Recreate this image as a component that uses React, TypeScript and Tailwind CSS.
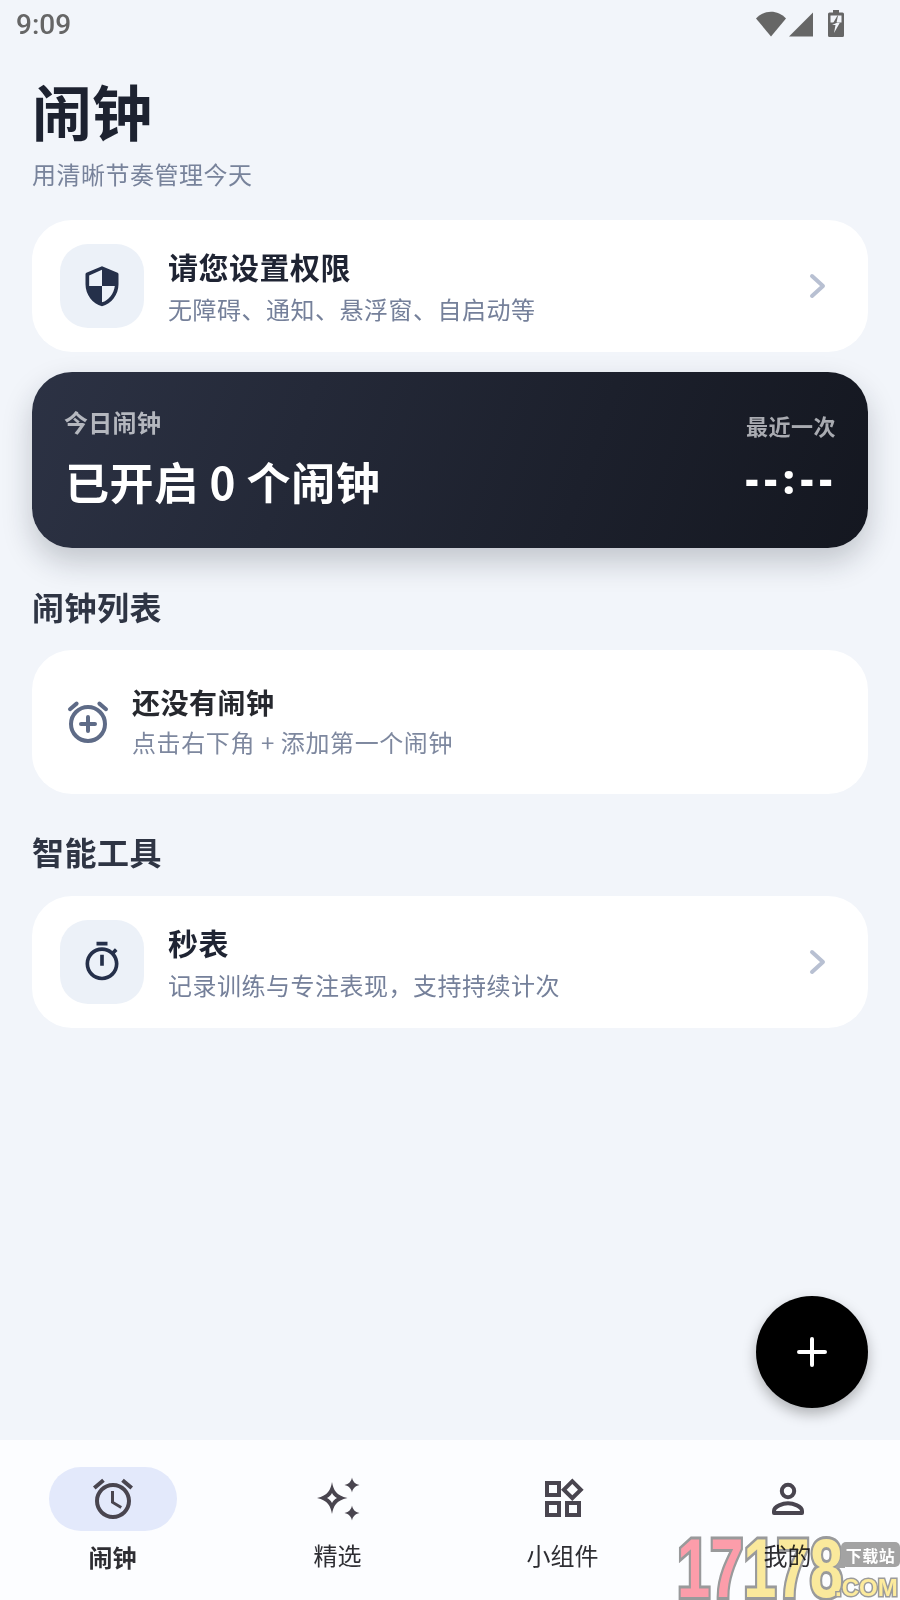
import React from "react";

const cjk = "font-['Noto_Sans_CJK_SC','Noto_Sans',sans-serif]";

const ChevronRight = () => (
  <svg width="18" height="26" viewBox="0 0 18 26" fill="none" className="mr-[25px]">
    <path d="M3 3L14 13L3 23" stroke="#b8c0d2" strokeWidth="4" strokeLinecap="round" strokeLinejoin="round" />
  </svg>
);

const ToolCard = ({
  title,
  desc,
  icon,
}: {
  title: string;
  desc: string;
  icon: React.ReactNode;
}) => (
  <div className="flex h-[132px] items-center rounded-[40px] bg-white pl-7 pr-4">
    <div className="flex h-[84px] w-[84px] items-center justify-center rounded-[28px] bg-[#ecf1f8]">
      {icon}
    </div>
    <div className="ml-[24px] flex-1">
      <div className="text-[30px] leading-[42px] font-bold tracking-[0.5px] text-[#1f2433]">{title}</div>
      <div className="mt-[4px] text-[24px] leading-[36px] tracking-[0.5px] text-[#75809a]">{desc}</div>
    </div>
    <ChevronRight />
  </div>
);

const NavItem = ({
  label,
  active,
  children,
}: {
  label: string;
  active?: boolean;
  children: React.ReactNode;
}) => (
  <div className="flex flex-col items-center">
    <div className={`flex h-16 w-32 items-center justify-center rounded-full ${active ? "bg-[#e3e9fb]" : ""}`}>
      {children}
    </div>
    <div className={`text-[24px] leading-[40px] text-[#2e2e33] ${active ? "mt-[6px] font-bold" : "mt-[4px] font-normal"}`}>
      {label}
    </div>
  </div>
);

export default function App() {
  return (
    <div className={`relative flex h-[1600px] w-[900px] flex-col overflow-hidden bg-[#f2f5fa] ${cjk}`}>
      {/* Status bar */}
      <div className="flex h-[50px] shrink-0 items-center pl-4 pr-[56px] text-[#666666]">
        <span className="font-['Roboto',sans-serif] text-[28px] leading-[50px] font-medium">9:09</span>
        <div className="ml-auto flex items-start pb-[3px]">
          <svg width="30" height="26" viewBox="0 0 30 26">
            <path d="M0 7.5C8-1.5 22-1.5 30 7.5L15 25.5z" fill="#666666" />
          </svg>
          <svg width="26" height="26" viewBox="0 0 26 26" className="ml-[2px]">
            <path d="M25 1.5V25.5H1z" fill="#666666" />
          </svg>
          <svg width="16" height="27" viewBox="0 0 16 27" className="ml-[14px] -mt-[1px]">
            <path d="M5 0h6v2.5h3.500a1.500 1.500 0 0 1 1.500 1.500v21.500a1.500 1.500 0 0 1-1.500 1.500h-13A1.500 1.500 0 0 1 0 25.500V4a1.500 1.500 0 0 1 1.500-1.500H5z" fill="#666666" />
            <path d="M2.500 5.500h11v7h-11z" fill="#f2f5fa" />
            <path d="M9.500 5.500L4 15h3.500L6 23l6-10.500H8.500L10 5.500z" fill="#666666" />
            <path d="M4 15h3.500L6 23l6-10.500h-2.500" fill="#f2f5fa" />
          </svg>
        </div>
      </div>

      {/* Page content */}
      <div className="flex-1 px-8">
        <h1 className="mt-[27px] text-[60px] leading-[66px] font-bold text-[#1d2230]">闹钟</h1>
        <p className="mt-[13px] text-[24px] leading-[36px] tracking-[0.5px] text-[#78839b]">用清晰节奏管理今天</p>

        <div className="mt-[28px]">
          <ToolCard
            title="请您设置权限"
            desc="无障碍、通知、悬浮窗、自启动等"
            icon={
              <svg width="44" height="44" viewBox="0 0 24 24" fill="#25304a">
                <path d="M12 1.200L3.500 4.800a1 1 0 0 0-.5.800V11c0 5.550 3.840 10.740 9 12 5.160-1.260 9-6.450 9-12V5.600a1 1 0 0 0-.5-.800L12 1.200zm0 10.790h7c-.53 4.120-3.280 7.790-7 8.940V12H5V6.300l7-3.110v8.800z" />
              </svg>
            }
          />
        </div>

        {/* Today summary */}
        <div className="mt-5 flex h-[176px] items-start justify-between rounded-[40px] bg-linear-110 from-[#2c3244] to-[#141720] pl-[32px] pr-[32px] shadow-[0_14px_30px_rgba(25,30,45,0.22)]">
          <div>
            <div className="mt-[32px] text-[24px] leading-[36px] font-bold tracking-[0.3px] text-[#b4b7be]">今日闹钟</div>
            <div className="mt-[11px] pl-[1px] text-[44px] leading-[60px] font-bold tracking-[0.6px] text-white">已开启 0 个闹钟</div>
          </div>
          <div className="flex flex-col items-end">
            <div className="mt-[37px] text-[22px] leading-[32px] font-bold tracking-[0.5px] text-[#a9abb1]">最近一次</div>
            <div className="mt-[13px] -mr-[2px] font-['Noto_Sans',sans-serif] text-[40px] leading-[50px] font-black tracking-[6px] text-white">
              --:--
            </div>
          </div>
        </div>

        <h2 className="mt-[35px] text-[32px] leading-[46px] font-bold tracking-[0.5px] text-[#2f3544]">闹钟列表</h2>

        <div className="mt-[21px] flex h-[144px] items-center rounded-[40px] bg-white pl-[32px]">
          <svg width="48" height="48" viewBox="0 0 24 24" fill="none" stroke="#5e6b87" strokeWidth="2" strokeLinecap="round">
            <circle cx="12" cy="13" r="8.500" />
            <path d="M3 5.600L6.300 2.800M21 5.600L17.700 2.800M12 9.500v7M8.500 13h7" />
          </svg>
          <div className="ml-[20px] -mt-[3px]">
            <div className="text-[28px] leading-[40px] font-bold tracking-[0.5px] text-[#26282e]">还没有闹钟</div>
            <div className="mt-[2px] text-[24px] leading-[36px] tracking-[0.6px] text-[#7e889f]">点击右下角 + 添加第一个闹钟</div>
          </div>
        </div>

        <h2 className="mt-[34px] text-[32px] leading-[46px] font-bold tracking-[0.5px] text-[#2f3544]">智能工具</h2>

        <div className="mt-[22px]">
          <ToolCard
            title="秒表"
            desc="记录训练与专注表现，支持持续计次"
            icon={
              <svg width="44" height="44" viewBox="0 0 24 24" fill="#25304a">
                <path d="M15 1H9v2h6V1zm-4 13h2V8h-2v6zm8.030-6.610l1.420-1.420c-.43-.51-.9-.99-1.410-1.410l-1.420 1.420C16.070 4.740 14.120 4 12 4c-4.970 0-9 4.030-9 9s4.020 9 9 9 9-4.030 9-9c0-2.120-.74-4.070-1.970-5.610zM12 20c-3.870 0-7-3.130-7-7s3.130-7 7-7 7 3.130 7 7-3.130 7-7 7z" />
              </svg>
            }
          />
        </div>
      </div>

      {/* Bottom navigation */}
      <div className="grid h-[160px] shrink-0 grid-cols-4 bg-[#fcfdff] pt-[27px]">
        <NavItem label="闹钟" active>
          <svg width="48" height="48" viewBox="0 0 24 24" fill="#49454f">
            <path d="M22 5.720l-4.600-3.860-1.290 1.530 4.600 3.860L22 5.720zM7.880 3.390L6.600 1.860 2 5.710l1.290 1.530 4.590-3.850zM12.500 8H11v6l4.750 2.850.75-1.230-4-2.370V8zM12 4c-4.970 0-9 4.030-9 9s4.030 9 9 9c4.970 0 9-4.030 9-9s-4.030-9-9-9zm0 16c-3.870 0-7-3.130-7-7s3.130-7 7-7 7 3.130 7 7-3.130 7-7 7z" />
          </svg>
        </NavItem>
        <NavItem label="精选">
          <svg width="48" height="48" viewBox="0 0 48 48" fill="#49454f">
            <path fillRule="evenodd" d="M18 7C19.500 15 22 20.500 33.500 23 22 25.500 19.500 31 18 39 16.500 31 14 25.500 3 23 14 20.500 16.500 15 18 7zM18 18C17 20 15.500 21.800 13 23 15.500 24.200 17 26 18 28 19 26 20.500 24.200 23 23 20.500 21.800 19 20 18 18z" />
            <path d="M38 2.500C38.800 6.500 41 9 45.500 10 41 11 38.800 13.500 38 17.500 37.200 13.500 35 11 30.500 10 35 9 37.200 6.500 38 2.500zM38 30.500C38.800 34.500 41 37 45.500 38 41 39 38.800 41.500 38 45.500 37.200 41.500 35 39 30.500 38 35 37 37.200 34.500 38 30.500z" />
          </svg>
        </NavItem>
        <NavItem label="小组件">
          <svg width="48" height="48" viewBox="0 0 24 24" fill="#49454f">
            <path d="M16.660 4.520l2.830 2.830-2.830 2.830-2.830-2.830 2.830-2.830M9 5v4H5V5h4m10 10v4h-4v-4h4M9 15v4H5v-4h4m7.660-13.310L11 7.340 16.660 13l5.660-5.660-5.660-5.650zM11 3H3v8h8V3zm10 10h-8v8h8v-8zm-10 0H3v8h8v-8z" />
          </svg>
        </NavItem>
        <NavItem label="我的">
          <svg width="48" height="48" viewBox="0 0 24 24" fill="none" stroke="#49454f" strokeWidth="2" strokeLinejoin="round">
            <circle cx="12" cy="8" r="3.100" />
            <path d="M5 19v-1c0-2.300 4.500-3.900 7-3.900s7 1.600 7 3.900v1z" />
          </svg>
        </NavItem>
      </div>

      {/* Floating add button */}
      <div className="absolute top-[1296px] left-[756px] flex h-28 w-28 items-center justify-center rounded-full bg-black shadow-[0_6px_14px_rgba(0,0,0,0.28)]">
        <svg width="32" height="32" viewBox="0 0 32 32" fill="none" stroke="white" strokeWidth="4" strokeLinecap="round">
          <path d="M16 3v26M3 16h26" />
        </svg>
      </div>

      {/* Site watermark */}
      <div className="absolute top-[1536px] left-[677px] flex origin-left scale-x-[0.71] font-['Liberation_Sans',sans-serif] text-[84px] leading-[64px] font-bold mix-blend-multiply [-webkit-text-stroke:6px_#9b9b9b] [paint-order:stroke]">
        <span className="text-[#ff9eaa]">17</span>
        <span className="text-[#fdeb9c]">178</span>
      </div>
      <svg width="10" height="14" viewBox="0 0 10 14" className="absolute top-[1555px] left-[835px]">
        <path d="M0 13L8 0H10V13z" fill="#a3a3a3" />
      </svg>
      <div className="absolute top-[1542px] left-[841px] flex h-[25px] w-[59px] items-center justify-center rounded-[5px] bg-[#a3a3a3] text-[16px] leading-none font-bold tracking-[0.5px] text-white">
        下载站
      </div>
      <div className="absolute top-[1575px] left-[835px] font-['Liberation_Sans',sans-serif] text-[24px] leading-[25px] font-bold text-[#fdeb9c] [-webkit-text-stroke:3px_#9b9b9b] [paint-order:stroke]">
        .COM
      </div>
    </div>
  );
}
